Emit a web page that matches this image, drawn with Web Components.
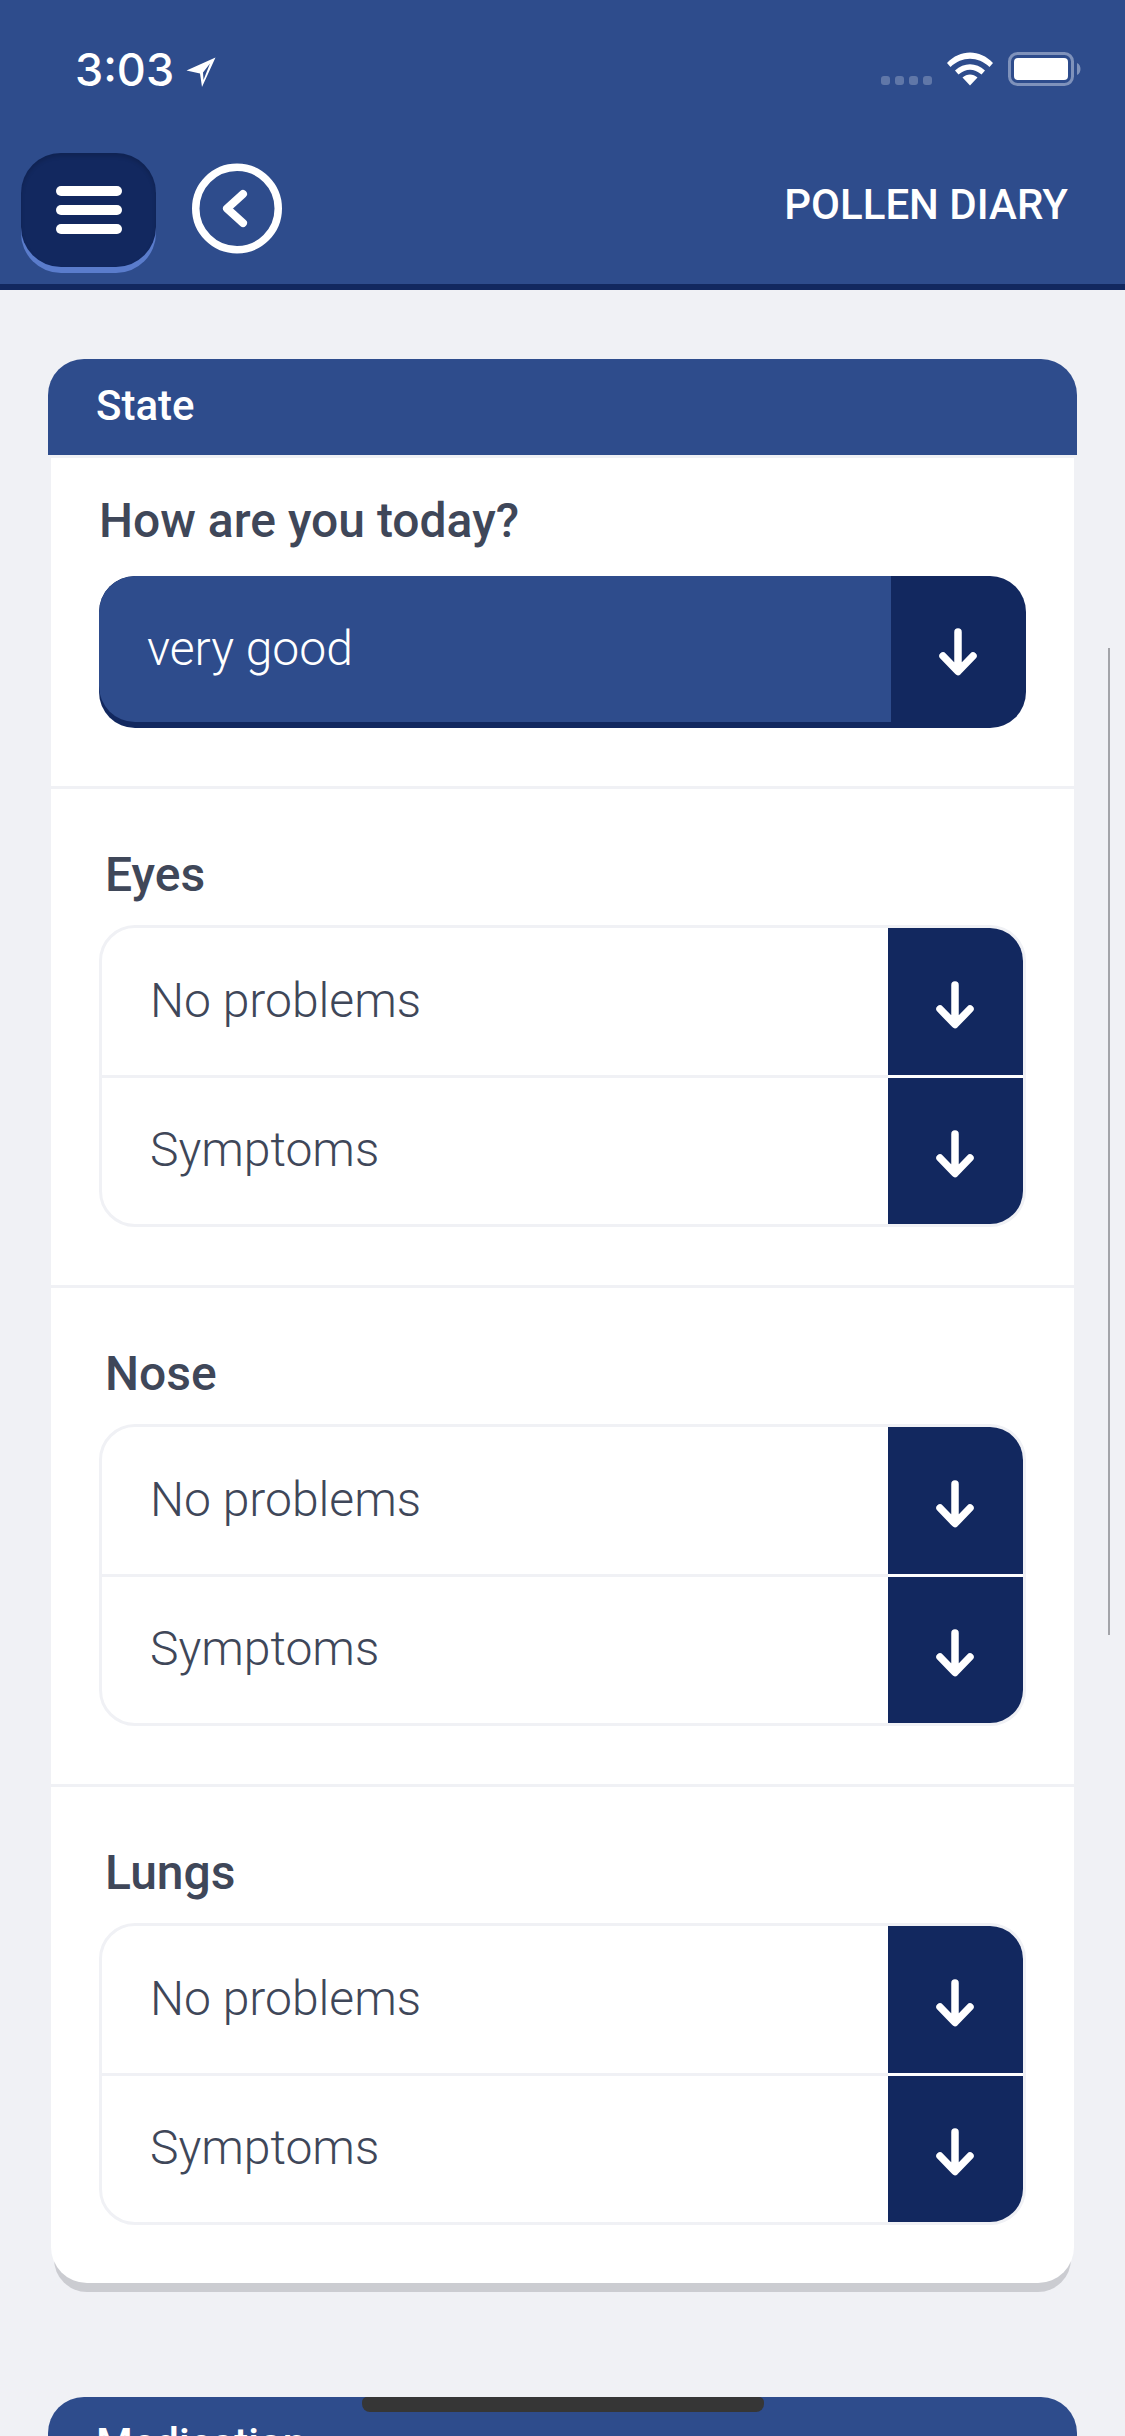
<!DOCTYPE html>
<html lang="en">
<head>
<meta charset="utf-8">
<title>Pollen Diary</title>
<style>
  html, body { margin: 0; height: 2436px; overflow: hidden; background: #f0f1f5; }
  body { font-family: Roboto, "Liberation Sans", sans-serif; position: relative; }
  main { display: flex; flex-direction: column; gap: 114px; padding: 69px 48px 0; }
</style>
</head>
<body>
<diary-header title="POLLEN DIARY"></diary-header>
<main>
  <diary-card heading="State">
    <mood-section label="How are you today?" value="very good"></mood-section>
    <symptom-group label="Eyes"></symptom-group>
    <symptom-group label="Nose"></symptom-group>
    <symptom-group label="Lungs" last></symptom-group>
  </diary-card>
  <diary-card heading="Medication"></diary-card>
</main>
<scroll-overlay></scroll-overlay>

<script>
const ARROW_DOWN = `<svg width="38" height="48" viewBox="0 0 38 48" fill="none" stroke="#fff" stroke-width="7.500" stroke-linecap="round" stroke-linejoin="round"><path d="M19 4V43M4 28L19 43.500L34 28"/></svg>`;

class DiaryHeader extends HTMLElement {
  constructor() {
    super();
    this.attachShadow({ mode: "open" });
    this.shadowRoot.innerHTML = `
      <style>
        :host { display: block; height: 284px; background: #2e4c8c; border-bottom: 6px solid #12285f; color: #fff; }
        .status { display: flex; justify-content: space-between; height: 153px; box-sizing: border-box; padding: 50px 44px 0 75px; }
        .left { display: flex; align-items: flex-start; gap: 12px; }
        .time { font: 500 45px/40px Inter, sans-serif; }
        .loc { margin-top: 7px; }
        .right { display: flex; align-items: flex-start; }
        .dots { display: flex; gap: 5px; margin: 26px 15px 0 0; }
        .dots i { width: 9px; height: 9px; border-radius: 3px; background: #6077a8; }
        .wifi { margin: 2px 15px 0 0; }
        .battery { margin-top: 2px; }
        .bar { display: flex; align-items: flex-start; justify-content: space-between; padding: 0 44px 0 21px; }
        .menu { width: 135px; height: 114px; border-radius: 40px; background: #12285f; box-shadow: 0 6px 0 #5a7ccc, inset 0 3px 4px rgba(0,0,0,.15);
                display: flex; flex-direction: column; align-items: center; justify-content: center; gap: 9px; margin-right: 36px; }
        .menu i { width: 66px; height: 10px; border-radius: 5px; background: #fff; }
        .back { margin-top: 10px; display: block; }
        .start { display: flex; }
        h1 { margin: 27px 13px 0 0; font: 500 42px/50px Roboto, sans-serif; white-space: nowrap; }
      </style>
      <div class="status">
        <div class="left">
          <span class="time">3:03</span>
          <svg class="loc" width="30" height="30" viewBox="0 0 30 30"><path fill="#fff" fill-rule="evenodd" d="M29.500 .5L.5 13.500L14 16.500L16 30ZM24 6.500L17 15.500L17.500 23Z"/></svg>
        </div>
        <div class="right">
          <div class="dots"><i></i><i></i><i></i><i></i></div>
          <svg class="wifi" width="46" height="34" viewBox="0 0 46 34"><path fill="#fff" d="M0 11C13-3 33-3 46 11L42.500 15C31 4 15 4 3.500 15ZM8 18.500C17 10 29 10 38 18.500L34.500 22.500C27 16 19 16 11.500 22.500ZM15.500 25.500C20 21.500 26 21.500 30.500 25.500L23 33.500Z"/></svg>
          <svg class="battery" width="73" height="34" viewBox="0 0 73 34"><rect x="1.500" y="1.500" width="63" height="31" rx="8" fill="none" stroke="#7f92bb" stroke-width="3"/><rect x="6" y="6" width="54" height="22" rx="4" fill="#fff"/><path d="M69 11C71.500 12 72.500 14.500 72.500 17C72.500 19.500 71.500 22 69 23Z" fill="#7f92bb"/></svg>
        </div>
      </div>
      <div class="bar">
        <div class="start">
          <div class="menu"><i></i><i></i><i></i></div>
          <svg class="back" width="90" height="91" viewBox="0 0 90 91" fill="none" stroke="#fff" stroke-width="7.500" stroke-linecap="round" stroke-linejoin="round"><circle cx="45" cy="45.500" r="41.250"/><path d="M51 31L35 45.500L51 60" stroke-width="8"/></svg>
        </div>
        <h1></h1>
      </div>`;
  }
  connectedCallback() {
    this.shadowRoot.querySelector("h1").textContent = this.getAttribute("title");
    this.removeAttribute("title");
  }
}

class DiaryCard extends HTMLElement {
  constructor() {
    super();
    this.attachShadow({ mode: "open" });
    this.shadowRoot.innerHTML = `
      <style>
        :host { display: block; }
        header { height: 96px; box-sizing: border-box; padding: 23px 48px 0; background: #2e4c8c; border-radius: 36px 36px 0 0; color: #fff; font: 500 42px/47px Roboto, sans-serif; }
        .body { margin: 3px 3px 0; background: #fff; border-radius: 0 0 36px 36px; box-shadow: 0 12px 0 -3px #cbccd1; }
      </style>
      <header></header>
      <div class="body"><slot></slot></div>`;
  }
  connectedCallback() {
    this.shadowRoot.querySelector("header").textContent = this.getAttribute("heading");
  }
}

class MoodSection extends HTMLElement {
  constructor() {
    super();
    this.attachShadow({ mode: "open" });
    this.shadowRoot.innerHTML = `
      <style>
        :host { display: block; box-sizing: border-box; height: 331px; padding: 35px 48px 0; border-bottom: 3px solid #f0f1f5; }
        .label { font: 500 48px/56px Roboto, sans-serif; color: #3f4759; margin-bottom: 27px; white-space: nowrap; }
        .select { height: 146px; border-radius: 36px; background: #12285f; padding-bottom: 6px; display: flex; overflow: hidden; }
        .value { flex: 1; background: #2e4c8c; color: #fff; font: 300 48px/146px Roboto, sans-serif; padding-left: 48px; border-radius: 36px 0 0 36px; }
        .arrow { width: 135px; box-sizing: border-box; display: flex; align-items: center; justify-content: center; padding: 6px 2px 0 0; }
      </style>
      <div class="label"></div>
      <div class="select"><div class="value"></div><div class="arrow">${ARROW_DOWN}</div></div>`;
  }
  connectedCallback() {
    this.shadowRoot.querySelector(".label").textContent = this.getAttribute("label");
    this.shadowRoot.querySelector(".value").textContent = this.getAttribute("value");
  }
}

class SymptomGroup extends HTMLElement {
  constructor() {
    super();
    this.attachShadow({ mode: "open" });
    this.shadowRoot.innerHTML = `
      <style>
        :host { display: block; box-sizing: border-box; height: 499px; padding: 60px 48px 0; border-bottom: 3px solid #f0f1f5; }
        :host([last]) { border-bottom: 0; height: 496px; }
        .label { font: 500 48px/52px Roboto, sans-serif; color: #3f4759; margin: 0 0 24px 6px; }
        .box { border: 3px solid #f0f1f5; border-radius: 36px; overflow: hidden; }
        .row { display: flex; height: 147px; }
        .row + .row { height: 146px; border-top: 3px solid #f0f1f5; }
        .text { flex: 1; font: 300 48px/145px Roboto, sans-serif; color: #3f4759; padding-left: 48px; }
        .row + .row .text { line-height: 143px; }
        .arrow { width: 135px; background: #12285f; display: flex; align-items: center; justify-content: center; padding: 6px 2px 0 0; box-sizing: border-box; }
        .row + .row .arrow { box-shadow: 0 -3px 0 #fff; }
      </style>
      <div class="label"></div>
      <div class="box">
        <div class="row"><div class="text">No problems</div><div class="arrow">${ARROW_DOWN}</div></div>
        <div class="row"><div class="text">Symptoms</div><div class="arrow">${ARROW_DOWN}</div></div>
      </div>`;
  }
  connectedCallback() {
    this.shadowRoot.querySelector(".label").textContent = this.getAttribute("label");
  }
}

// scrollbar and home indicator lie over the page
class ScrollOverlay extends HTMLElement {
  constructor() {
    super();
    this.attachShadow({ mode: "open" });
    this.shadowRoot.innerHTML = `
      <style>
        .scroll { position: absolute; left: 1108px; top: 648px; width: 2px; height: 987px; background: #a3a4a9; }
        .home { position: absolute; left: 362px; top: 2397px; width: 402px; height: 15px; background: #363636; border-radius: 5px 5px 8px 8px; }
      </style>
      <div class="scroll"></div>
      <div class="home"></div>`;
  }
}

customElements.define("diary-header", DiaryHeader);
customElements.define("diary-card", DiaryCard);
customElements.define("mood-section", MoodSection);
customElements.define("symptom-group", SymptomGroup);
customElements.define("scroll-overlay", ScrollOverlay);
</script>
</body>
</html>
